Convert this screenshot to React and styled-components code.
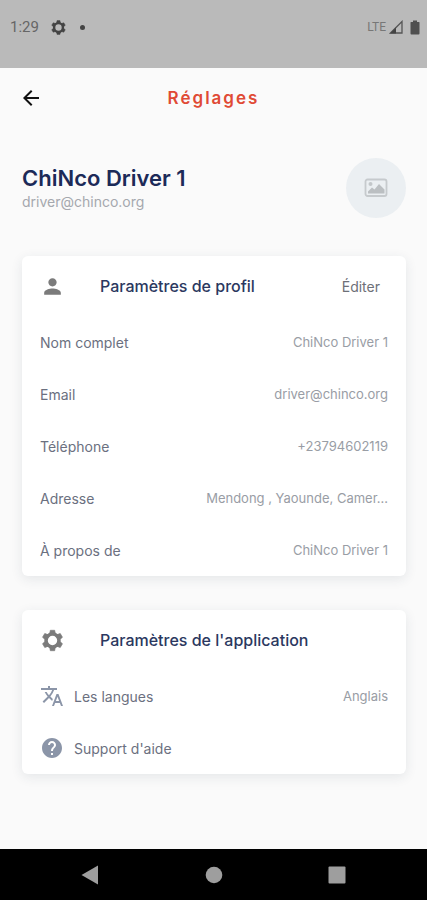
import styled, { createGlobalStyle } from "styled-components";
import { MdArrowBack, MdHelp, MdPerson, MdTranslate } from "react-icons/md";

const profileFields = [
  { label: "Nom complet", value: "ChiNco Driver 1" },
  { label: "Email", value: "driver@chinco.org" },
  { label: "Téléphone", value: "+23794602119" },
  { label: "Adresse", value: "Mendong , Yaounde, Camer..." },
  { label: "À propos de", value: "ChiNco Driver 1" },
];

const teeth = [0, 60, 120, 180, 240, 300];

const GearIcon = ({ size }) => (
  <svg width={size} height={size} viewBox="0 0 24 24">
    <circle cx="12" cy="12" r="6.2" fill="none" stroke="currentColor" strokeWidth="3.4" />
    {teeth.map((angle) => (
      <path
        key={angle}
        d="M9.2 6 L9.9 2.2 H14.1 L14.8 6 Z"
        fill="currentColor"
        stroke="currentColor"
        strokeWidth="0.6"
        strokeLinejoin="round"
        transform={`rotate(${angle} 12 12)`}
      />
    ))}
  </svg>
);

const StatusBar = () => (
  <StatusBarWrapper>
    <StatusGroup>
      <Clock>1:29</Clock>
      <GearIcon size={17} />
      <Dot />
    </StatusGroup>
    <StatusIcons>
      <Network>LTE</Network>
      <svg width="14" height="14" viewBox="0 0 14 14">
        <path d="M1.5 13 L13 1.5 V13 Z" fill="none" stroke="#555" strokeWidth="1.3" />
        <path d="M1 13.5 L7 7.5 V13.5 Z" fill="#444" />
      </svg>
      <svg width="10" height="15" viewBox="0 0 10 15">
        <path d="M3 0.5h4v1.5h2q.5 0 .5.6v11q0 .9-.9.9H1.4q-.9 0-.9-.9v-11Q.5 2 1 2h2z" fill="#505050" />
      </svg>
    </StatusIcons>
  </StatusBarWrapper>
);

const NavigationBar = () => (
  <NavWrapper aria-label="Navigation">
    <NavButton aria-label="Retour">
      <svg width="18" height="20" viewBox="0 0 18 20">
        <path d="M0.5 10 L17 0.5 V19.5 Z" fill="#9e9e9e" />
      </svg>
    </NavButton>
    <NavButton aria-label="Accueil">
      <svg width="18" height="18" viewBox="0 0 18 18">
        <circle cx="9" cy="9" r="8.3" fill="#9e9e9e" />
      </svg>
    </NavButton>
    <NavButton aria-label="Applications récentes">
      <svg width="18" height="18" viewBox="0 0 18 18">
        <rect x="0.5" y="0.5" width="17" height="17" rx="1" fill="#9e9e9e" />
      </svg>
    </NavButton>
  </NavWrapper>
);

const App = () => {
  return (
    <>
      <GlobalStyle />
      <Screen>
        <StatusBar />
        <AppBar>
          <BackButton aria-label="Retour">
            <MdArrowBack size={24} />
          </BackButton>
          <Title>Réglages</Title>
        </AppBar>
        <Content>
          <Profile>
            <div>
              <Name>ChiNco Driver 1</Name>
              <ProfileEmail>driver@chinco.org</ProfileEmail>
            </div>
            <Avatar>
              <svg width="24" height="20" viewBox="0 0 24 20">
                <rect x="1.5" y="1.5" width="21" height="16.5" rx="2" fill="none" stroke="#c6cacd" strokeWidth="1.8" />
                <circle cx="6.5" cy="6" r="2" fill="#c3c7ca" />
                <path d="M4 15.5 V13.5 L8 9.5 L10.5 11.5 L15 6 L20.5 11.5 V15.5 Z" fill="#bbbfc2" />
              </svg>
            </Avatar>
          </Profile>

          <Card>
            <CardHeader>
              <MdPerson size={25} />
              <CardTitle>Paramètres de profil</CardTitle>
              <EditButton>Éditer</EditButton>
            </CardHeader>
            {profileFields.map((field) => (
              <Row key={field.label}>
                <Label>{field.label}</Label>
                <Value>{field.value}</Value>
              </Row>
            ))}
          </Card>

          <Card>
            <CardHeader>
              <GearIcon size={25} />
              <CardTitle>Paramètres de l'application</CardTitle>
            </CardHeader>
            <RowButton>
              <MdTranslate size={24} />
              <Label>Les langues</Label>
              <Value>Anglais</Value>
            </RowButton>
            <RowButton>
              <MdHelp size={24} />
              <Label>Support d'aide</Label>
            </RowButton>
          </Card>
        </Content>
        <NavigationBar />
      </Screen>
    </>
  );
};

const GlobalStyle = createGlobalStyle`
  * {
    box-sizing: border-box;
  }

  body {
    margin: 0;
    background-color: #fafafa;
    font-family: Inter, "Open Sans", sans-serif;
  }

  button {
    font-family: inherit;
    border: none;
    padding: 0;
    background-color: transparent;
    cursor: pointer;
  }
`;

const Screen = styled.div`
  min-height: 100vh;
  display: flex;
  flex-direction: column;
`;

const StatusBarWrapper = styled.div`
  height: 68px;
  padding: 0 7px 14px 10px;
  display: flex;
  align-items: center;
  justify-content: space-between;
  background-color: #bababa;
  color: #444;
`;

const StatusGroup = styled.div`
  display: flex;
  align-items: center;
  gap: 11px;
`;

const Clock = styled.span`
  font-family: Roboto, sans-serif;
  font-size: 15px;
  color: #666;
`;

const Dot = styled.span`
  width: 5px;
  height: 5px;
  margin-left: 2px;
  border-radius: 50%;
  background-color: #444;
`;

const StatusIcons = styled.div`
  display: flex;
  align-items: center;
  gap: 3px;

  svg:last-child {
    margin-left: 4px;
  }
`;

const Network = styled.span`
  font-family: Roboto, sans-serif;
  font-size: 12px;
  color: #777;
`;

const AppBar = styled.header`
  height: 60px;
  padding: 0 19px;
  display: grid;
  grid-template-columns: 24px 1fr 24px;
  align-items: center;
`;

const BackButton = styled.button`
  height: 24px;
  color: #111;
`;

const Title = styled.h1`
  margin: 0;
  text-align: center;
  font-size: 17px;
  font-weight: 600;
  letter-spacing: 2px;
  color: #e04a35;
`;

const Content = styled.main`
  flex: 1;
  padding: 30px 21px 34px 22px;
`;

const Profile = styled.section`
  margin-bottom: 38px;
  display: flex;
  align-items: center;
  justify-content: space-between;
`;

const Name = styled.h2`
  margin: 0;
  font-size: 22px;
  line-height: 28px;
  font-weight: 600;
  color: #1c2a58;
`;

const ProfileEmail = styled.p`
  margin: 0;
  font-size: 14px;
  line-height: 20px;
  color: #a5a8ae;
`;

const Avatar = styled.div`
  width: 60px;
  height: 60px;
  display: flex;
  align-items: center;
  justify-content: center;
  border-radius: 50%;
  background-color: #ebeff2;
`;

const Card = styled.section`
  background-color: #fff;
  border-radius: 6px;
  box-shadow: 0 3px 12px rgba(40, 60, 80, 0.1);

  & + & {
    margin-top: 34px;
  }
`;

const CardHeader = styled.div`
  height: 60px;
  padding: 0 18px;
  display: flex;
  align-items: center;
  color: #7b7b7b;
`;

const CardTitle = styled.h3`
  flex: 1;
  margin: 0 0 0 35px;
  font-size: 16px;
  font-weight: 500;
  color: #2b3860;
`;

const EditButton = styled.button`
  padding: 8px;
  font-size: 14px;
  color: #6d7078;
`;

const Row = styled.div`
  width: 100%;
  height: 52px;
  padding: 0 18px;
  display: flex;
  align-items: center;
  gap: 10px;
  color: #8b95a8;
`;

const RowButton = styled(Row).attrs({ as: "button" })``;

const Label = styled.span`
  font-size: 14px;
  white-space: nowrap;
  color: #6b7080;
`;

const Value = styled.span`
  flex: 1;
  min-width: 0;
  overflow: hidden;
  text-align: right;
  text-overflow: ellipsis;
  white-space: nowrap;
  font-size: 13px;
  color: #999da5;
`;

const NavWrapper = styled.nav`
  height: 51px;
  padding: 0 28px;
  display: flex;
  align-items: center;
  background-color: #000;
`;

const NavButton = styled.button`
  flex: 1;
  height: 100%;
  display: flex;
  align-items: center;
  justify-content: center;
`;

export default App;
